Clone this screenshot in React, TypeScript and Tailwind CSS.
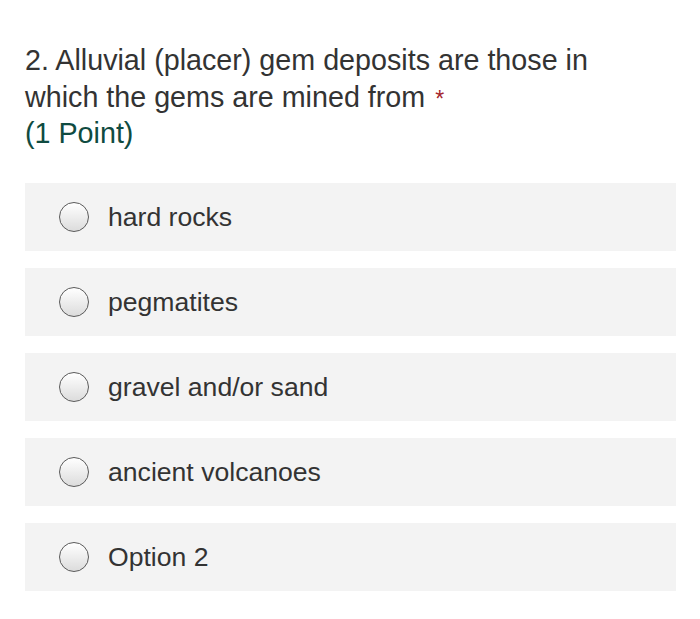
const options = ['hard rocks', 'pegmatites', 'gravel and/or sand', 'ancient volcanoes', 'Option 2'];

function Radio() {
  return (
    <span className="h-[30px] w-[30px] shrink-0 rounded-full border-[1.5px] border-[#5a5a5a] bg-gradient-to-b from-white to-[#dcdcdc]" />
  );
}

export default function App() {
  return (
    <div className="min-h-[619px] w-[700px] bg-white pl-[25px] pt-[42px] font-['Liberation_Sans',Arial,sans-serif]">
      <div className="pr-[60px] text-[28.7px] leading-[36.5px] text-[#333333]">
        <div>
          2. Alluvial (placer) gem deposits are those in which the gems are mined from
          <span className="ml-[10px] text-[23px] leading-none text-[#a4262c]">*</span>
        </div>
        <div className="text-[#0f4b41]">(1 Point)</div>
      </div>
      <div className="mt-[31px] flex w-[651px] flex-col gap-[17px]">
        {options.map((o) => (
          <div key={o} className="flex h-[68px] items-center gap-[19px] bg-[#f3f3f3] pl-[34px]">
            <Radio />
            <span className="text-[26.6px] leading-[30px] text-[#333333]">{o}</span>
          </div>
        ))}
      </div>
    </div>
  );
}
